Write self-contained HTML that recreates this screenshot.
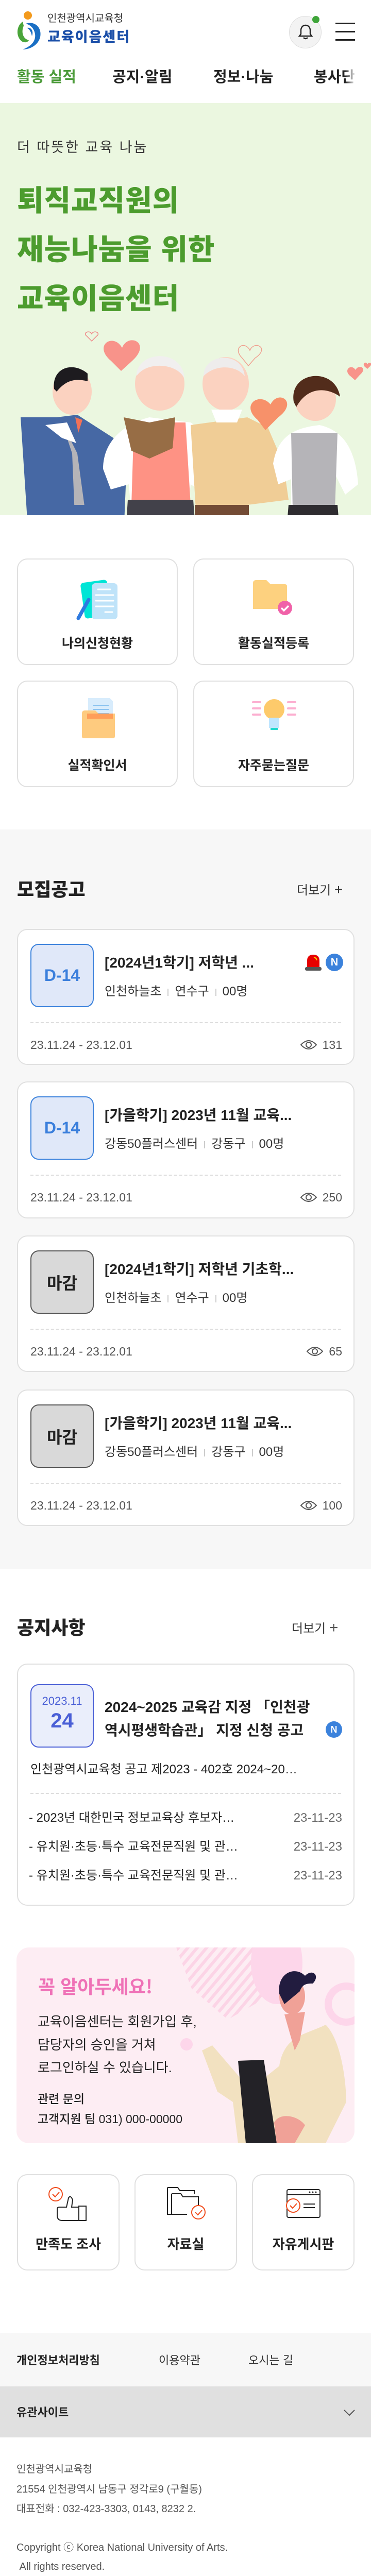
<!DOCTYPE html>
<html lang="ko"><head><meta charset="utf-8">
<style>
*{margin:0;padding:0;box-sizing:border-box}
html{width:720px;height:5112px;overflow:hidden}
body{width:720px;height:5112px;position:relative;background:#fff;font-family:"Liberation Sans","Noto Sans CJK KR",sans-serif;color:#222;overflow:hidden}
.a{position:absolute;white-space:nowrap}
.card{position:absolute;background:#fff;border:2px solid #e0e0e0;border-radius:20px}
.hand{font-family:"WenQuanYi Zen Hei","Noto Sans CJK KR",sans-serif}
.badge{position:absolute;left:24px;top:27px;width:123px;height:123px;border-radius:16px;display:flex;align-items:center;justify-content:center;font-weight:700;font-size:32px}
.blue{background:#e0e8f9;border:2px solid #3b82dc;color:#3b7fdc}
.gray{background:#d9d9d9;border:2px solid #555;color:#222}
.tt{position:absolute;left:168px;top:44px;font-size:28px;font-weight:700;line-height:40px;color:#222}
.mt{position:absolute;left:168px;top:103px;font-size:24px;line-height:34px;color:#333}
.mt i{display:inline-block;width:2px;height:14px;background:#ccc;margin:0 12px;vertical-align:middle}
.dash{position:absolute;left:24px;right:24px;top:179px;border-top:2px dashed #ddd}
.dt{position:absolute;left:24px;top:206px;font-size:23px;line-height:34px;color:#555}
.vw{position:absolute;right:22px;top:206px;font-size:23px;line-height:34px;color:#555;display:flex;align-items:center;gap:10px}
.gc{position:absolute;width:312px;height:207px}
.gc .lb{position:absolute;left:0;right:0;top:146px;text-align:center;font-size:25px;font-weight:600;line-height:34px}
.ic{position:absolute;width:199px;height:187px}
.ic .lb{position:absolute;left:0;right:0;top:116px;text-align:center;font-size:26px;font-weight:600;line-height:36px}
.nl{position:absolute;left:56px;font-size:24px;line-height:34px;color:#222}
.nd{position:absolute;right:56px;font-size:24px;line-height:34px;color:#666}
</style></head><body>

<!-- header -->
<svg class="a" style="left:30px;top:20px" width="56" height="82" viewBox="0 0 56 82">
<circle cx="24" cy="10" r="8" fill="#f39a1d"/>
<path d="M14 22 C2 30 0 50 12 60 C18 64 24 62 26 58 C16 56 10 44 16 30 Z" fill="#4aa53a"/>
<path d="M20 26 C36 20 52 32 48 52 C44 68 28 76 14 76 C30 70 40 60 38 46 C36 34 28 28 20 26 Z" fill="#1a6fc4"/>
<path d="M22 34 C30 32 36 40 32 50 C30 40 26 36 22 34Z" fill="#1a6fc4"/>
</svg>
<div class="a" style="left:92px;top:24px;font-size:20px;line-height:24px;color:#333">인천광역시교육청</div>
<div class="a" style="left:92px;top:56px;font-size:27px;line-height:32px;color:#1a4ea8;font-weight:900;letter-spacing:2px">교육이음센터</div>
<div class="a" style="left:561px;top:31px;width:63px;height:63px;border-radius:50%;background:#f3f3f3;border:1px solid #ddd"></div>
<svg class="a" style="left:577px;top:45px" width="32" height="34" viewBox="0 0 32 34"><path d="M16 4 C10 4 7 9 7 14 L7 21 L4 25 L28 25 L25 21 L25 14 C25 9 22 4 16 4Z" fill="none" stroke="#222" stroke-width="2.4"/><path d="M12 28 Q16 32 20 28" fill="none" stroke="#222" stroke-width="2.4"/></svg>
<div class="a" style="left:606px;top:31px;width:14px;height:14px;border-radius:50%;background:#3fa53a"></div>
<div class="a" style="left:651px;top:44px;width:38px;height:3px;background:#222"></div>
<div class="a" style="left:651px;top:60px;width:38px;height:3px;background:#222"></div>
<div class="a" style="left:651px;top:76px;width:38px;height:3px;background:#222"></div>
<div class="a" style="left:33px;top:131px;font-size:29px;line-height:38px;font-weight:700;color:#4c9b3a">활동 실적</div>
<div class="a" style="left:218px;top:131px;font-size:29px;line-height:38px;font-weight:700;color:#222">공지·알림</div>
<div class="a" style="left:414px;top:131px;font-size:29px;line-height:38px;font-weight:700;color:#222">정보·나눔</div>
<div class="a" style="left:609px;top:131px;font-size:29px;line-height:38px;font-weight:700;color:#222">봉사단</div>
<div class="a" style="left:670px;top:125px;width:50px;height:50px;background:linear-gradient(90deg,rgba(255,255,255,0),#fff 40%)"></div>

<!-- hero -->
<div class="a" style="left:0;top:200px;width:720px;height:800px;background:#ebf7e0"></div>
<div class="a hand" style="left:33px;top:266px;font-size:27px;line-height:36px;color:#333;letter-spacing:3px">더 따뜻한 교육 나눔</div>
<div class="a hand" style="left:33px;top:338px;font-size:56px;line-height:95px;color:#4c9c2e;font-weight:900;letter-spacing:1px">퇴직교직원의<br>재능나눔을 위한<br>교육이음센터</div>
<svg class="a" style="left:0;top:640px" width="720" height="360" viewBox="0 0 720 360">
<path d="M168 12 c-8-6 6-12 10-4 c4-8 18-2 10 4 l-10 10z" fill="none" stroke="#f08a8a" stroke-width="1.5"/>
<path d="M215 60 c-35-30 5-55 22-25 c12-30 58-10 20 25 l-22 20z" fill="#f8938a"/>
<path d="M470 55 c-20-20 5-35 15-15 c8-20 40-5 10 15 l-13 15z" fill="none" stroke="#f0a090" stroke-width="1.5"/>
<path d="M680 90 c-15-12 2-25 10-12 c6-12 25-4 8 10 l-9 10z" fill="#f8938a"/>
<path d="M708 72 c-6-6 2-12 5-5 c3-6 12-2 4 5 l-4 4z" fill="#f8938a"/>
<g transform="translate(0,-120)">
<!-- boy -->
<path d="M40 290 L55 520 L240 520 L245 400 L220 330 L150 285 L110 290 Z" fill="#4668a4"/>
<path d="M120 300 L150 360 L165 470 L145 480 L140 360Z" fill="#b5b4b8"/>
<rect x="88" y="470" width="120" height="100" fill="#2d2b30"/>
<rect x="55" y="460" width="185" height="30" fill="#4668a4"/>
<ellipse cx="140" cy="240" rx="38" ry="45" fill="#fbd2c0"/>
<path d="M105 235 C100 195 140 180 170 205 L170 220 C150 215 130 215 110 240Z" fill="#1d1b1f"/>
<path d="M88 305 L130 300 L148 340 L120 330Z" fill="#fff"/>
<path d="M146 290 L152 320 L160 295Z" fill="#f27157"/>
<!-- grandma -->
<path d="M200 390 C200 330 250 300 290 290 L370 300 C400 320 410 360 410 400 L400 440 L370 420 L365 480 L255 480 L250 420 L215 430Z" fill="#fff"/>
<path d="M260 300 L360 300 L370 460 L255 460Z" fill="#fe9284"/>
<path d="M248 450 L375 450 L385 580 L240 580Z" fill="#42414a"/>
<ellipse cx="310" cy="225" rx="48" ry="52" fill="#fbd2c0"/>
<path d="M265 210 C265 160 355 155 358 215 C345 185 285 180 265 210Z" fill="#f1efef"/>
<path d="M240 290 L290 300 L340 290 L335 350 L290 370 L255 355Z" fill="#976d45"/>
<!-- grandpa -->
<path d="M370 305 L480 290 L520 310 L550 380 L560 450 L480 460 L380 470 Z" fill="#f0cd96"/>
<rect x="378" y="460" width="105" height="120" fill="#734b35"/>
<ellipse cx="438" cy="225" rx="45" ry="52" fill="#fbd2c0"/>
<path d="M395 210 C395 165 470 160 475 210 C460 190 420 185 395 210Z" fill="#eeecec"/>
<path d="M410 275 L470 275 L460 300 L420 300Z" fill="#fff"/>
<path d="M500 295 c-35-30 5-55 25-30 c15-30 55-5 15 25 l-25 25z" fill="#f7916a"/>
<!-- girl -->
<path d="M530 380 C540 320 580 310 620 305 C665 315 690 350 695 420 L670 440 L650 400 L650 460 L565 460 L565 410 L540 420Z" fill="#fff"/>
<path d="M565 320 L655 320 L650 470 L568 470Z" fill="#b5b4b8"/>
<path d="M560 460 L655 460 L665 580 L550 580Z" fill="#2e2c30"/>
<ellipse cx="612" cy="255" rx="40" ry="42" fill="#fbd2c0"/>
<path d="M570 260 C560 200 650 190 660 250 C640 235 600 225 575 270Z" fill="#522c1b"/>
</g>
</svg>

<!-- quick menu -->
<div class="card gc" style="left:33px;top:1084px">
<svg class="a" style="left:111px;top:36px" width="82" height="82" viewBox="0 0 82 82"><rect x="14" y="6" width="52" height="70" rx="6" transform="rotate(-8 40 40)" fill="#00e5d6"/><rect x="32" y="10" width="50" height="70" rx="7" fill="#bfe3f9"/><g stroke="#fff" stroke-width="3" stroke-linecap="round"><path d="M44 22h24M40 33h34M40 44h34M40 55h34M58 66h14"/></g><path d="M26 42 L6 78" stroke="#2e7ae0" stroke-width="7" stroke-linecap="round"/></svg>
<div class="lb">나의신청현황</div></div>
<div class="card gc" style="left:375px;top:1084px">
<svg class="a" style="left:112px;top:38px" width="88" height="72" viewBox="0 0 88 72"><path d="M2 8 Q2 2 8 2 L28 2 L36 10 L64 10 Q68 10 68 14 L68 58 L2 58Z" fill="#fdd17f"/><circle cx="64" cy="56" r="14" fill="#f061a8"/><path d="M57 56 l5 5 l9-9" stroke="#fff" stroke-width="3.5" fill="none"/></svg>
<div class="lb">활동실적등록</div></div>
<div class="card gc" style="left:33px;top:1321px">
<svg class="a" style="left:122px;top:30px" width="70" height="82" viewBox="0 0 70 82"><path d="M14 2 L56 2 L62 8 L62 50 L14 50Z" fill="#d8ecfc"/><g stroke="#8cc3f0" stroke-width="2"><path d="M24 16h30M24 24h30M24 32h30"/></g><path d="M2 32 Q2 26 8 26 L28 26 L34 32 L66 32 L66 76 Q66 80 62 80 L6 80 Q2 80 2 76Z" fill="#fecb7f"/><rect x="12" y="32" width="50" height="10" fill="#ff8a4a" opacity=".7"/></svg>
<div class="lb">실적확인서</div></div>
<div class="card gc" style="left:375px;top:1321px">
<svg class="a" style="left:112px;top:30px" width="86" height="84" viewBox="0 0 86 84"><g stroke="#fcaed0" stroke-width="4" stroke-linecap="round"><path d="M2 10h14M2 22h14M2 34h14M70 10h14M70 22h14M70 34h14"/></g><circle cx="43" cy="24" r="20" fill="#fdca6b"/><rect x="33" y="40" width="20" height="20" fill="#bfe6ff"/><rect x="36" y="60" width="14" height="4" fill="#22d8d0"/></svg>
<div class="lb">자주묻는질문</div></div>

<!-- recruit -->
<div class="a" style="left:0;top:1610px;width:720px;height:1435px;background:#f7f7f7"></div>
<div class="a" style="left:33px;top:1704px;font-size:36px;line-height:46px;font-weight:800">모집공고</div>
<div class="a" style="left:576px;top:1710px;font-size:24px;line-height:34px;color:#333">더보기 <span style="font-size:28px">+</span></div>

<div class="card" style="left:33px;top:1803px;width:655px;height:264px">
<div class="badge blue">D-14</div>
<div class="tt">[2024년1학기] 저학년 ...</div>
<svg class="a" style="left:556px;top:46px" width="34" height="34" viewBox="0 0 34 34"><path d="M5 28 L5 14 Q5 2 17 2 Q29 2 29 14 L29 28Z" fill="#e60000"/><path d="M18 7 Q23 8 24 13" stroke="#ffd200" stroke-width="2" fill="none"/><rect x="1" y="26" width="32" height="7" rx="3" fill="#555"/></svg>
<div class="a" style="left:597px;top:46px;width:34px;height:34px;border-radius:50%;background:#3b82dc;color:#fff;font-weight:700;font-size:20px;line-height:34px;text-align:center">N</div>
<div class="mt">인천하늘초<i></i>연수구<i></i>00명</div>
<div class="dash"></div><div class="dt">23.11.24 - 23.12.01</div>
<div class="vw"><svg width="34" height="20" viewBox="0 0 34 20"><path d="M2 10 Q17 -6 32 10 Q17 26 2 10Z" fill="none" stroke="#555" stroke-width="2"/><circle cx="17" cy="10" r="5" fill="none" stroke="#555" stroke-width="2"/></svg>131</div>
</div>

<div class="card" style="left:33px;top:2099px;width:655px;height:266px">
<div class="badge blue">D-14</div>
<div class="tt">[가을학기] 2023년 11월 교육...</div>
<div class="mt">강동50플러스센터<i></i>강동구<i></i>00명</div>
<div class="dash"></div><div class="dt">23.11.24 - 23.12.01</div>
<div class="vw"><svg width="34" height="20" viewBox="0 0 34 20"><path d="M2 10 Q17 -6 32 10 Q17 26 2 10Z" fill="none" stroke="#555" stroke-width="2"/><circle cx="17" cy="10" r="5" fill="none" stroke="#555" stroke-width="2"/></svg>250</div>
</div>

<div class="card" style="left:33px;top:2398px;width:655px;height:265px">
<div class="badge gray">마감</div>
<div class="tt">[2024년1학기] 저학년 기초학...</div>
<div class="mt">인천하늘초<i></i>연수구<i></i>00명</div>
<div class="dash"></div><div class="dt">23.11.24 - 23.12.01</div>
<div class="vw"><svg width="34" height="20" viewBox="0 0 34 20"><path d="M2 10 Q17 -6 32 10 Q17 26 2 10Z" fill="none" stroke="#555" stroke-width="2"/><circle cx="17" cy="10" r="5" fill="none" stroke="#555" stroke-width="2"/></svg>65</div>
</div>

<div class="card" style="left:33px;top:2697px;width:655px;height:265px">
<div class="badge gray">마감</div>
<div class="tt">[가을학기] 2023년 11월 교육...</div>
<div class="mt">강동50플러스센터<i></i>강동구<i></i>00명</div>
<div class="dash"></div><div class="dt">23.11.24 - 23.12.01</div>
<div class="vw"><svg width="34" height="20" viewBox="0 0 34 20"><path d="M2 10 Q17 -6 32 10 Q17 26 2 10Z" fill="none" stroke="#555" stroke-width="2"/><circle cx="17" cy="10" r="5" fill="none" stroke="#555" stroke-width="2"/></svg>100</div>
</div>

<!-- notice -->
<div class="a" style="left:33px;top:3137px;font-size:36px;line-height:46px;font-weight:800">공지사항</div>
<div class="a" style="left:566px;top:3143px;font-size:24px;line-height:34px;color:#333">더보기 <span style="font-size:30px;color:#555">+</span></div>
<div class="card" style="left:33px;top:3229px;width:655px;height:470px">
<div class="a" style="left:24px;top:38px;width:123px;height:123px;border-radius:16px;background:#eaeefb;border:2px solid #4a5fd6;text-align:center;color:#4a5fd6">
<div style="font-size:22px;line-height:30px;margin-top:16px">2023.11</div>
<div style="font-size:40px;line-height:46px;font-weight:700">24</div></div>
<div class="a" style="left:168px;top:60px;font-size:28px;line-height:45px;font-weight:700">2024~2025 교육감 지정 「인천광<br>역시평생학습관」 지정 신청 공고</div>
<div class="a" style="left:597px;top:110px;width:32px;height:32px;border-radius:50%;background:#3b82dc;color:#fff;font-weight:700;font-size:18px;line-height:32px;text-align:center">N</div>
<div class="a" style="left:24px;top:186px;font-size:24px;line-height:36px">인천광역시교육청 공고 제2023 - 402호 2024~20…</div>
<div class="dash" style="top:249px"></div>
</div>
<div class="nl" style="top:3512px">- 2023년 대한민국 정보교육상 후보자…</div><div class="nd" style="top:3512px">23-11-23</div>
<div class="nl" style="top:3568px">- 유치원·초등·특수 교육전문직원 및 관…</div><div class="nd" style="top:3568px">23-11-23</div>
<div class="nl" style="top:3624px">- 유치원·초등·특수 교육전문직원 및 관…</div><div class="nd" style="top:3624px">23-11-23</div>

<!-- banner -->
<div class="a" style="left:32px;top:3780px;width:656px;height:380px;border-radius:24px;background:#fdedf3;overflow:hidden">
<svg class="a" style="left:0;top:0" width="656" height="380" viewBox="0 0 656 380">
<defs><pattern id="st" width="14" height="14" patternUnits="userSpaceOnUse" patternTransform="rotate(40)"><rect width="6" height="14" fill="#fcd4e6"/></pattern></defs>
<path d="M310 0 L500 0 L480 100 L410 140 L340 80Z" fill="url(#st)"/>
<ellipse cx="505" cy="30" rx="50" ry="80" fill="#fdd6ea"/>
<circle cx="640" cy="110" r="35" fill="none" stroke="#fdd6ea" stroke-width="14"/>
<circle cx="330" cy="188" r="12" fill="#fdd6ea"/>
<path d="M510 230 C520 170 560 170 600 150 C630 180 640 260 640 300 L600 380 L430 380 L420 300 L390 280 L360 200 L380 190 L440 260 L460 270 Z" fill="#f2e1c0"/>
<path d="M520 130 L560 125 L550 180 L540 200Z" fill="#f0a197"/>
<ellipse cx="535" cy="95" rx="25" ry="35" fill="#f0a197"/>
<path d="M510 90 C505 50 540 35 560 55 C575 40 590 55 575 70 C565 70 555 70 550 85 L520 110Z" fill="#221c3f"/>
<path d="M430 220 L480 218 L505 380 L445 380Z" fill="#232227"/>
<path d="M500 340 C510 320 545 325 560 345 L540 380 L505 380Z" fill="#f0a197"/>
</svg>
<div class="a hand" style="left:42px;top:52px;font-size:36px;line-height:44px;color:#ef72b7;font-weight:700">꼭 알아두세요!</div>
<div class="a" style="left:41px;top:122px;font-size:26px;line-height:44.5px;color:#222">교육이음센터는 회원가입 후,<br>담당자의 승인을 거쳐<br>로그인하실 수 있습니다.</div>
<div class="a" style="left:41px;top:275px;font-size:23px;line-height:39px;color:#222;font-weight:500">관련 문의<br>고객지원 팀 031) 000-00000</div>
</div>

<!-- icon cards -->
<div class="card ic" style="left:33px;top:4220px">
<svg class="a" style="left:58px;top:22px" width="80" height="70" viewBox="0 0 80 70"><circle cx="15" cy="15" r="13" fill="none" stroke="#f04a1a" stroke-width="2"/><path d="M9 15l5 5l8-9" fill="none" stroke="#f04a1a" stroke-width="2"/><path d="M22 40 L36 40 L40 22 Q44 16 48 26 L46 40 L60 40 L60 66 L28 66 Q18 66 18 56 L18 44 Q18 40 22 40Z" fill="none" stroke="#222" stroke-width="2"/><rect x="60" y="38" width="14" height="28" fill="none" stroke="#222" stroke-width="2"/></svg>
<div class="lb">만족도 조사</div></div>
<div class="card ic" style="left:261px;top:4220px">
<svg class="a" style="left:60px;top:22px" width="80" height="70" viewBox="0 0 80 70"><path d="M2 2 L22 2 L26 8 L54 8 L54 14" fill="none" stroke="#222" stroke-width="2"/><path d="M2 2 L2 54 L40 54" fill="none" stroke="#222" stroke-width="2"/><path d="M10 14 L28 14 L32 20 L62 20 L62 38 M10 14 L10 54" fill="none" stroke="#222" stroke-width="2"/><circle cx="62" cy="50" r="13" fill="#fff" stroke="#f04a1a" stroke-width="2"/><path d="M56 50l5 5l8-9" fill="none" stroke="#f04a1a" stroke-width="2"/></svg>
<div class="lb">자료실</div></div>
<div class="card ic" style="left:489px;top:4220px">
<svg class="a" style="left:64px;top:26px" width="70" height="60" viewBox="0 0 70 60"><rect x="2" y="2" width="64" height="54" rx="3" fill="none" stroke="#222" stroke-width="2"/><path d="M2 12h64" stroke="#222" stroke-width="2"/><g fill="#222"><circle cx="46" cy="7" r="1.5"/><circle cx="52" cy="7" r="1.5"/><circle cx="58" cy="7" r="1.5"/></g><path d="M34 30h22M34 37h22" stroke="#222" stroke-width="2"/><circle cx="14" cy="33" r="13" fill="#fff" stroke="#f04a1a" stroke-width="2"/><path d="M8 33l5 5l8-9" fill="none" stroke="#f04a1a" stroke-width="2"/></svg>
<div class="lb">자유게시판</div></div>

<!-- footer -->
<div class="a" style="left:0;top:4528px;width:720px;height:104px;background:#f7f7f7"></div>
<div class="a" style="left:32px;top:4565px;font-size:22px;line-height:34px;font-weight:700">개인정보처리방침</div>
<div class="a" style="left:308px;top:4565px;font-size:22px;line-height:34px;color:#333">이용약관</div>
<div class="a" style="left:482px;top:4565px;font-size:22px;line-height:34px;color:#333">오시는 길</div>
<div class="a" style="left:0;top:4632px;width:720px;height:99px;background:#e0e0e0"></div>
<div class="a" style="left:32px;top:4666px;font-size:22px;line-height:34px;font-weight:700">유관사이트</div>
<svg class="a" style="left:666px;top:4675px" width="24" height="16" viewBox="0 0 24 16"><path d="M2 3 L12 13 L22 3" fill="none" stroke="#555" stroke-width="2"/></svg>
<div class="a" style="left:32px;top:4774px;font-size:20px;line-height:38.5px;color:#555">인천광역시교육청<br>21554 인천광역시 남동구 정각로9 (구월동)<br>대표전화 : 032-423-3303, 0143, 8232 2.</div>
<div class="a" style="left:32px;top:4927px;font-size:20px;line-height:37px;color:#555">Copyright ⓒ Korea National University of Arts.<br>&nbsp;All rights reserved.</div>
</body></html>
